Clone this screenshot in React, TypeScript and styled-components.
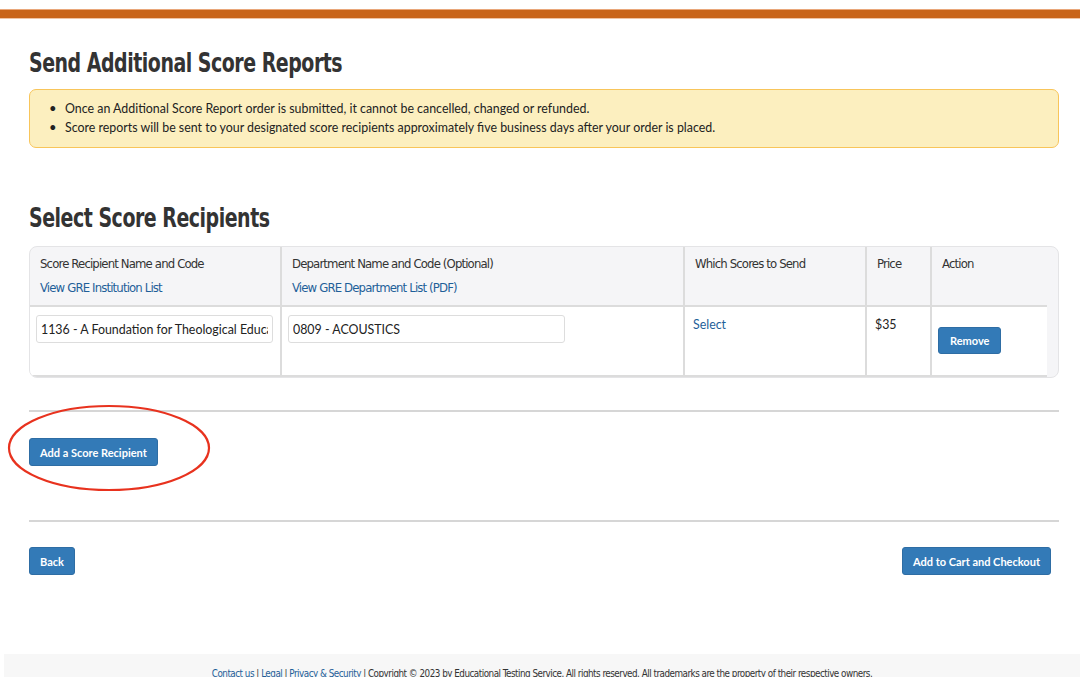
import { FC } from 'react';
import styled, { createGlobalStyle } from 'styled-components';

const GlobalStyle = createGlobalStyle`
    html, body {
        margin: 0;
        padding: 0;
        background: #ffffff;
    }
    body {
        font-family: Lato, 'Open Sans', sans-serif;
        color: #222;
    }
`;

const condensed = `'DejaVu Sans Condensed', 'DejaVu Sans', sans-serif`;

const Page = styled.div`
    position: relative;
    width: 1080px;
    height: 677px;
    overflow: hidden;
    display: flex;
    flex-direction: column;
`;

const TopBar = styled.div`
    margin-top: 9px;
    height: 10px;
    background: #c9651a;
    border-top: 1px solid #e9a77a;
    border-bottom: 1px solid #f0c4a4;
    box-sizing: border-box;
`;

const Main = styled.main`
    padding: 0 21px 0 29px;
    flex: 1;
`;

const Heading = styled.h1`
    font-family: ${condensed};
    font-weight: bold;
    font-size: 27px;
    letter-spacing: -0.6px;
    color: #333;
    transform: scaleX(0.78);
    transform-origin: left center;
    white-space: nowrap;
`;

const PageTitle = styled(Heading)`
    margin: 26px 0 8px;
    line-height: 36px;
`;

const SectionTitle = styled(Heading)`
    margin: 53px 0 11px;
    line-height: 34px;
`;

const Notice = styled.ul`
    margin: 0;
    padding: 9px 16px 10px 35px;
    list-style: none;
    background: #fcefbf;
    border: 1px solid #f8c55a;
    border-radius: 7px;
    font-size: 12.4px;
    line-height: 19px;
    color: #222;
`;

const NoticeItem = styled.li`
    &::before {
        content: '•';
        display: inline-block;
        width: 16px;
        margin-left: -16px;
        font-size: 13px;
    }
`;

const TableWrap = styled.div`
    background: #f5f5f7;
    border: 1px solid #e4e4e6;
    border-radius: 8px;
    padding-right: 11px;
    overflow: hidden;
`;

const Table = styled.table`
    width: 100%;
    border-collapse: collapse;
    table-layout: fixed;
`;

const HeadCell = styled.th<{ $width?: number }>`
    width: ${p => (p.$width ? `${p.$width}px` : 'auto')};
    height: 59px;
    padding: 5px 10px;
    vertical-align: top;
    text-align: left;
    font-family: ${condensed};
    font-weight: normal;
    font-size: 13px;
    line-height: 24px;
    letter-spacing: -0.85px;
    color: #333;
    border-right: 2px solid #dcdcdc;
    border-bottom: 2px solid #dcdcdc;
    box-sizing: border-box;

    &:last-child {
        border-right: none;
    }
`;

const HeadLink = styled.a`
    display: block;
    color: #1f5f99;
    text-decoration: none;
`;

const BodyCell = styled.td`
    height: 70px;
    padding: 8px 6px;
    vertical-align: top;
    background: #fff;
    font-size: 12.4px;
    color: #222;
    border-right: 2px solid #dcdcdc;
    border-bottom: 2px solid #dcdcdc;
    box-sizing: border-box;

    &:last-child {
        border-right: none;
    }
`;

const TextInput = styled.input<{ $width: number }>`
    width: ${p => p.$width}px;
    height: 28px;
    box-sizing: border-box;
    padding: 0 4px;
    border: 1px solid #ddd;
    border-radius: 3px;
    font-family: Lato, 'Open Sans', sans-serif;
    font-size: 12.4px;
    color: #222;
    background: #fff;
`;

const CellText = styled.span<{ $link?: boolean }>`
    display: block;
    padding: 2px 2px 0;
    color: ${p => (p.$link ? '#1f5f99' : '#222')};
`;

const Button = styled.button`
    height: 28px;
    padding: 0 10px;
    background: #337ab7;
    border: 1px solid #2e6da4;
    border-radius: 3px;
    color: #fff;
    font-family: Lato, 'Open Sans', sans-serif;
    font-weight: bold;
    font-size: 11px;
    cursor: pointer;
`;

const RemoveButton = styled(Button)`
    height: 27px;
    margin-top: 12px;
    padding: 0 11px;
`;

const Divider = styled.hr`
    margin: 0;
    border: none;
    border-top: 2px solid #d6d6d6;
`;

const Spacer = styled.div<{ $height: number }>`
    height: ${p => p.$height}px;
`;

const AddRow = styled.div`
    padding: 26px 0 54px;
`;

const ActionsRow = styled.div`
    display: flex;
    justify-content: space-between;
    padding: 25px 8px 0 0;
`;

const Circle = styled.svg`
    position: absolute;
    left: 6px;
    top: 403px;
    pointer-events: none;
`;

const Footer = styled.footer`
    margin-left: 4px;
    height: 23px;
    box-sizing: border-box;
    background: #f7f7f7;
    padding-top: 13px;
    text-align: center;
    font-family: ${condensed};
    font-size: 9.8px;
    line-height: 14px;
    letter-spacing: -0.5px;
    color: #333;
    white-space: nowrap;
`;

const FooterLink = styled.a`
    color: #1f5f99;
    text-decoration: none;
`;

const columns = [
    { title: 'Score Recipient Name and Code', link: 'View GRE Institution List', width: 251 },
    { title: 'Department Name and Code (Optional)', link: 'View GRE Department List (PDF)', width: 403 },
    { title: 'Which Scores to Send', width: 182 },
    { title: 'Price', width: 65 },
    { title: 'Action' },
];

const App: FC = () => {
    return (
        <Page>
            <GlobalStyle />
            <TopBar />
            <Main>
                <PageTitle>Send Additional Score Reports</PageTitle>
                <Notice>
                    <NoticeItem>
                        Once an Additional Score Report order is submitted, it cannot be cancelled,
                        changed or refunded.
                    </NoticeItem>
                    <NoticeItem>
                        Score reports will be sent to your designated score recipients approximately
                        five business days after your order is placed.
                    </NoticeItem>
                </Notice>

                <SectionTitle as="h2">Select Score Recipients</SectionTitle>
                <TableWrap>
                    <Table>
                        <thead>
                            <tr>
                                {columns.map(c => (
                                    <HeadCell key={c.title} $width={c.width}>
                                        {c.title}
                                        {c.link && <HeadLink href="#">{c.link}</HeadLink>}
                                    </HeadCell>
                                ))}
                            </tr>
                        </thead>
                        <tbody>
                            <tr>
                                <BodyCell>
                                    <TextInput
                                        $width={237}
                                        readOnly
                                        value="1136 - A Foundation for Theological Education"
                                    />
                                </BodyCell>
                                <BodyCell>
                                    <TextInput $width={277} readOnly value="0809 - ACOUSTICS" />
                                </BodyCell>
                                <BodyCell>
                                    <CellText $link>Select</CellText>
                                </BodyCell>
                                <BodyCell>
                                    <CellText>$35</CellText>
                                </BodyCell>
                                <BodyCell>
                                    <RemoveButton>Remove</RemoveButton>
                                </BodyCell>
                            </tr>
                        </tbody>
                    </Table>
                </TableWrap>

                <Spacer $height={32} />
                <Divider />
                <AddRow>
                    <Button>Add a Score Recipient</Button>
                </AddRow>
                <Divider />
                <ActionsRow>
                    <Button>Back</Button>
                    <Button>Add to Cart and Checkout</Button>
                </ActionsRow>
            </Main>
            <Footer>
                <FooterLink href="#">Contact us</FooterLink> | <FooterLink href="#">Legal</FooterLink> |{' '}
                <FooterLink href="#">Privacy &amp; Security</FooterLink> | Copyright © 2023 by
                Educational Testing Service. All rights reserved. All trademarks are the property of
                their respective owners.
            </Footer>
            <Circle width="206" height="90" viewBox="0 0 206 90">
                <ellipse cx="103" cy="45" rx="100" ry="42" fill="none" stroke="#e8321e" strokeWidth="2.2" />
            </Circle>
        </Page>
    );
};

export default App;
